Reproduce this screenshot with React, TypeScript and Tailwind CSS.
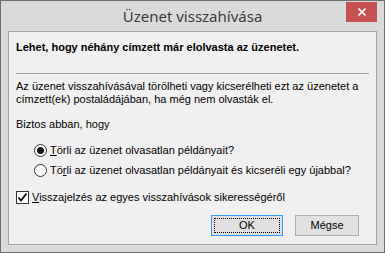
import { X } from 'lucide-react';

function Radio({ checked }: { checked: boolean }) {
  return (
    <span className="w-[13px] h-[13px] rounded-full border border-[#333333] bg-white flex items-center justify-center shrink-0">
      {checked && <span className="w-[7px] h-[7px] rounded-full bg-[#1a1a1a]" />}
    </span>
  );
}

function CheckBox() {
  return (
    <span className="w-[13px] h-[13px] border border-[#333333] bg-white flex items-center justify-center shrink-0">
      <svg width="11" height="11" viewBox="0 0 11 11">
        <path d="M1.5 5.5 L4 8.5 L9.5 1.5" fill="none" stroke="#111" strokeWidth="1.8" />
      </svg>
    </span>
  );
}

export default function App() {
  return (
    <div
      className="w-[385px] h-[253px] bg-[#dadada] border border-[#6f6f6f] flex flex-col text-[#000]"
      style={{ fontFamily: '"Liberation Sans", Arial, sans-serif' }}
    >
      <div className="relative h-[30px] shrink-0">
        <div
          className="text-center text-[15px] leading-[30px] text-[#3b3b3b]"
          style={{ fontFamily: '"Noto Sans", "Open Sans", sans-serif' }}
        >
          Üzenet visszahívása
        </div>
        <div className="absolute top-[1px] right-[7px] w-[31px] h-[20px] bg-[#c75050] flex items-center justify-center">
          <X className="w-[12px] h-[12px] text-white" strokeWidth={3.5} />
        </div>
      </div>

      <div className="flex-1 mx-[7px] mb-[7px] border border-[#a3a3a3] bg-[#f0f0f0] flex flex-col px-[7px] text-[11px]">
        <p className="font-bold mt-[9px] leading-[13px]">Lehet, hogy néhány címzett már elolvasta az üzenetet.</p>
        <div className="h-px bg-[#a0a0a0] mt-[19px]" />
        <p className="mt-[6px] leading-[13px]">
          Az üzenet visszahívásával törölheti vagy kicserélheti ezt az üzenetet a címzett(ek) postaládájában, ha még
          nem olvasták el.
        </p>
        <p className="mt-[12px] leading-[13px]">Biztos abban, hogy</p>

        <div className="mt-[13px] ml-[18px] flex flex-col gap-[7px]">
          <label className="flex items-center gap-[3px] leading-[13px]">
            <Radio checked />
            <span>
              <span className="underline">T</span>örli az üzenet olvasatlan példányait?
            </span>
          </label>
          <label className="flex items-center gap-[3px] leading-[13px]">
            <Radio checked={false} />
            <span>
              Tö<span className="underline">r</span>li az üzenet olvasatlan példányait és kicseréli egy újabbal?
            </span>
          </label>
        </div>

        <label className="mt-[14px] flex items-center gap-[3px] leading-[13px]">
          <CheckBox />
          <span>
            <span className="underline">V</span>isszajelzés az egyes visszahívások sikerességéről
          </span>
        </label>

        <div className="mt-[11px] flex justify-end gap-[12px] pr-[10px]">
          <button className="w-[72px] h-[21px] border border-[#3399ff] bg-[#e1e1e1] p-[2px]">
            <span className="w-full h-full border border-dotted border-[#000] flex items-center justify-center">OK</span>
          </button>
          <button className="w-[64px] h-[21px] border border-[#adadad] bg-[#e1e1e1] flex items-center justify-center">
            Mégse
          </button>
        </div>
      </div>
    </div>
  );
}
